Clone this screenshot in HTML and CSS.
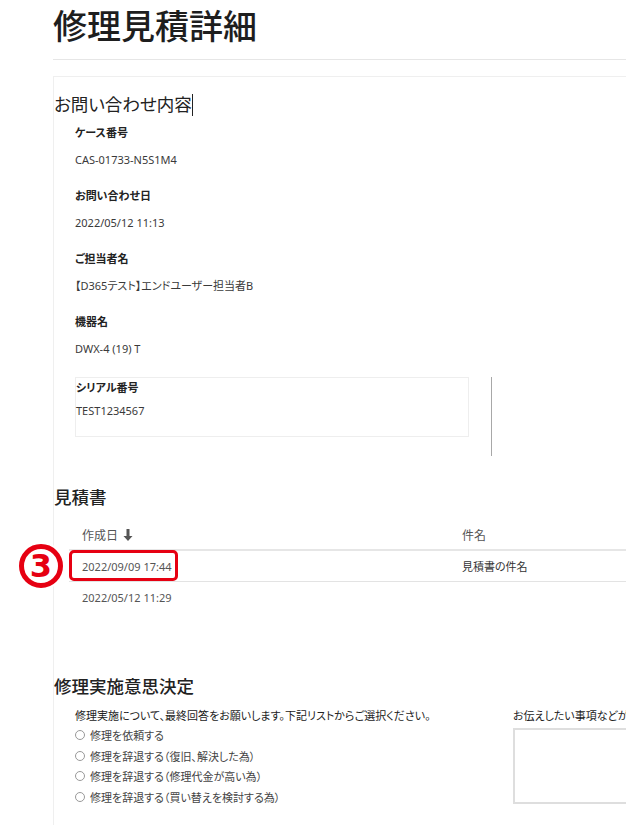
FILE: index.html
```html
<!DOCTYPE html>
<html lang="ja">
<head>
  <meta charset="UTF-8">
  <meta name="viewport" content="width=device-width, initial-scale=1.0">
  <title>修理見積詳細</title>
  <link rel="stylesheet" href="styles.css">
</head>
<body>

  <div class="page">
    <h1 class="page-title">修理見積詳細</h1>

    <div class="section">
      <h2 class="section-title">お問い合わせ内容<span class="caret"></span></h2>

      <div class="fields">
        <div class="field">
          <div class="field-label">ケース番号</div>
          <div class="field-value">CAS-01733-N5S1M4</div>
        </div>
        <div class="field">
          <div class="field-label">お問い合わせ日</div>
          <div class="field-value">2022/05/12 11:13</div>
        </div>
        <div class="field">
          <div class="field-label">ご担当者名</div>
          <div class="field-value">【D365テスト】エンドユーザー担当者B</div>
        </div>
        <div class="field">
          <div class="field-label">機器名</div>
          <div class="field-value">DWX-4 (19) T</div>
        </div>
        <div class="field-row">
          <div class="field boxed">
            <div class="field-label">シリアル番号</div>
            <div class="field-value">TEST1234567</div>
          </div>
          <div class="divider"></div>
        </div>
      </div>

      <h2 class="section-title quote-title">見積書</h2>

      <div class="quote-table">
        <div class="row head">
          <div class="cell date">作成日
            <svg class="sort" width="10" height="12" viewBox="0 0 10 12">
              <path d="M3.5 0h3v7h3L5 12 0.5 7h3z" fill="#555"/>
            </svg>
          </div>
          <div class="cell">件名</div>
        </div>
        <div class="row">
          <div class="cell date">2022/09/09 17:44</div>
          <div class="cell name">見積書の件名</div>
        </div>
        <div class="row last">
          <div class="cell date">2022/05/12 11:29</div>
          <div class="cell name"></div>
        </div>

        <span class="mark-num">3</span>
        <span class="mark-box"></span>
      </div>

      <h2 class="section-title decide-title">修理実施意思決定</h2>

      <div class="decide">
        <div class="decide-left">
          <p class="decide-note">修理実施について、最終回答をお願いします。下記リストからご選択ください。</p>
          <label class="option"><span class="radio"></span>修理を依頼する</label>
          <label class="option"><span class="radio"></span>修理を辞退する（復旧、解決した為）</label>
          <label class="option"><span class="radio"></span>修理を辞退する（修理代金が高い為）</label>
          <label class="option"><span class="radio"></span>修理を辞退する（買い替えを検討する為）</label>
        </div>
        <div class="decide-right">
          <p class="decide-note">お伝えしたい事項などがありましたらご記入ください。</p>
          <div class="comment-box"></div>
        </div>
      </div>
    </div>
  </div>

</body>
</html>
```

FILE: styles.css
```css
body {
  margin: 0;
  font-family: "Noto Sans", "Noto Sans CJK JP", sans-serif;
  font-feature-settings: "palt";
  color: #222;
  background: #fff;
  overflow: hidden;
  height: 825px;
}

.page {
  padding-left: 53px;
  width: 800px;
}

.page-title {
  margin: 0;
  padding: 2px 0 9px 0;
  font-size: 34px;
  line-height: 48px;
  font-weight: 500;
  color: #1e1e1e;
  border-bottom: 1px solid #e6e6e6;
}

.section {
  margin-top: 16px;
  border-top: 1px solid #efefef;
  border-left: 1px solid #efefef;
  height: 800px;
}

.section-title {
  margin: 14px 0 0 0;
  font-size: 17.5px;
  line-height: 26px;
  font-weight: 400;
  color: #222;
}

.caret {
  display: inline-block;
  width: 1px;
  height: 22px;
  background: #222;
  vertical-align: -5px;
}

.fields {
  padding-left: 21px;
  margin-top: 6px;
}

.field {
  margin-bottom: 16px;
}

.field-label {
  font-size: 11px;
  line-height: 20px;
  font-weight: 700;
  color: #222;
}

.field-value {
  margin-top: 7px;
  font-size: 11px;
  line-height: 20px;
  color: #3a3a3a;
}

.field-row {
  display: flex;
  align-items: flex-start;
  gap: 22px;
  margin-top: 18px;
}

.field.boxed {
  width: 392px;
  height: 58px;
  margin: 0;
  border: 1px solid #eeeeee;
}

.field.boxed .field-value {
  margin-top: 3px;
}

.divider {
  width: 1px;
  height: 79px;
  background: #a8a8a8;
}

.quote-title {
  margin-top: 28px;
  font-weight: 500;
}

.quote-table {
  position: relative;
  margin: 11px 0 0 15px;
}

.row {
  display: flex;
  height: 30px;
  align-items: center;
  border-bottom: 1px solid #e3e3e3;
  font-size: 11px;
  color: #555;
}

.row.head {
  height: 28px;
  font-size: 12px;
  border-bottom: 2px solid #e6e6e6;
}

.row.last {
  border-bottom: none;
}

.cell.date {
  width: 380px;
  padding-left: 13px;
  display: flex;
  align-items: center;
  gap: 5px;
}

.cell.name {
  color: #333;
}

.mark-box {
  position: absolute;
  left: 0;
  top: 29px;
  width: 103px;
  height: 25px;
  border: 3px solid #e60012;
  border-radius: 5px;
}

.mark-num {
  position: absolute;
  left: -50px;
  top: 23px;
  width: 34px;
  height: 34px;
  border: 5px solid #e60012;
  border-radius: 50%;
  background: #fff;
  box-shadow: 0 0 0 2px #fff;
  color: #e60012;
  font-family: "DejaVu Sans", sans-serif;
  font-weight: 700;
  font-size: 32px;
  line-height: 34px;
  text-align: center;
}

.decide-title {
  margin-top: 61px;
  font-weight: 500;
}

.decide {
  display: flex;
  margin-top: 8px;
}

.decide-left {
  width: 459px;
  padding-left: 21px;
  box-sizing: border-box;
}

.decide-note {
  margin: 0;
  font-size: 11px;
  line-height: 18px;
  color: #222;
  white-space: nowrap;
}

.option {
  display: flex;
  align-items: center;
  gap: 5px;
  height: 20.6px;
  font-size: 11px;
  color: #444;
}

.radio {
  width: 8px;
  height: 8px;
  border: 1px solid #999;
  border-radius: 50%;
}

.decide-right {
  width: 300px;
}

.comment-box {
  margin-top: 3px;
  height: 72px;
  border: 2px solid #dedede;
}
```
